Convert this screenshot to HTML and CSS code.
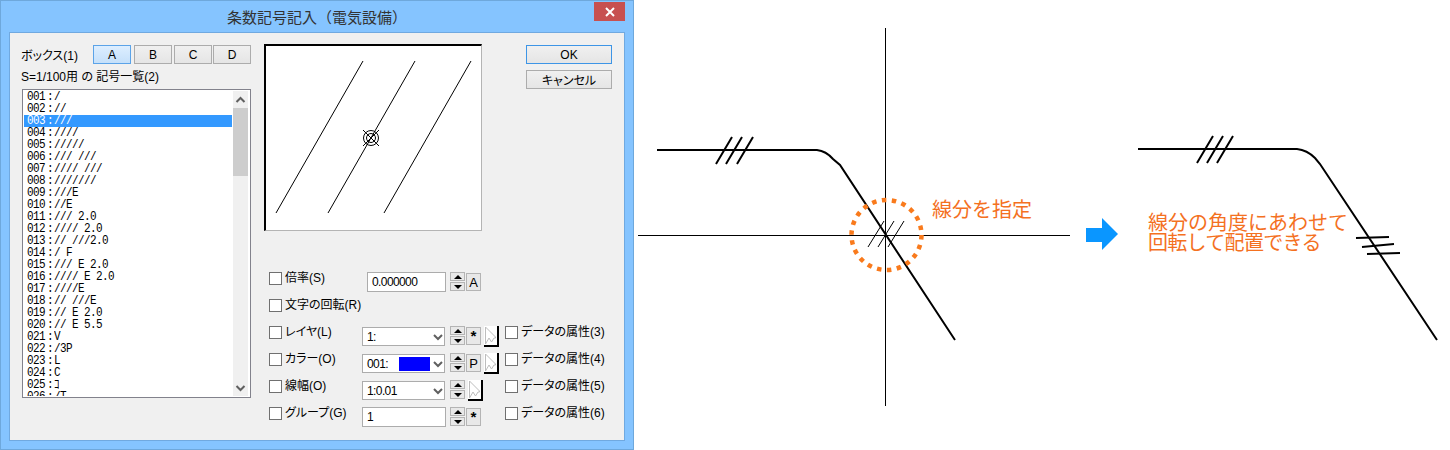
FILE: index.html
```html
<!DOCTYPE html>
<html lang="ja">
<head>
    <meta charset="UTF-8">
    <title>条数記号記入</title>
    <link rel="stylesheet" href="styles.css">
</head>
<body>
<div class="page">
    <!-- Dialog -->
    <div class="dialog">
        <div class="titlebar">
            <span class="title">条数記号記入（電気設備）</span>
            <div class="close">
                <svg width="12" height="12" viewBox="0 0 12 12"><path d="M2 2 L10 10 M10 2 L2 10" stroke="#fff" stroke-width="2"/></svg>
            </div>
        </div>
        <div class="client">
            <div class="left-col">
                <div class="box-row">
                    <span class="box-label">ボックス(1)</span>
                    <div class="btn tab active">A</div>
                    <div class="btn tab tab-b">B</div>
                    <div class="btn tab tab-c">C</div>
                    <div class="btn tab tab-d">D</div>
                </div>
                <div class="list-label">S=1/100用 の 記号一覧(2)</div>
                <div class="list">
                    <ul class="rows">
                        <li><span class="no">001 :</span><span>/</span></li>
                        <li><span class="no">002 :</span><span>//</span></li>
                        <li class="selected"><span class="no">003 :</span><span>///</span></li>
                        <li><span class="no">004 :</span><span>////</span></li>
                        <li><span class="no">005 :</span><span>/////</span></li>
                        <li><span class="no">006 :</span><span>/// ///</span></li>
                        <li><span class="no">007 :</span><span>//// ///</span></li>
                        <li><span class="no">008 :</span><span>///////</span></li>
                        <li><span class="no">009 :</span><span>///E</span></li>
                        <li><span class="no">010 :</span><span>//E</span></li>
                        <li><span class="no">011 :</span><span>/// 2.0</span></li>
                        <li><span class="no">012 :</span><span>//// 2.0</span></li>
                        <li><span class="no">013 :</span><span>// ///2.0</span></li>
                        <li><span class="no">014 :</span><span>/ F</span></li>
                        <li><span class="no">015 :</span><span>/// E 2.0</span></li>
                        <li><span class="no">016 :</span><span>//// E 2.0</span></li>
                        <li><span class="no">017 :</span><span>////E</span></li>
                        <li><span class="no">018 :</span><span>// ///E</span></li>
                        <li><span class="no">019 :</span><span>// E 2.0</span></li>
                        <li><span class="no">020 :</span><span>// E 5.5</span></li>
                        <li><span class="no">021 :</span><span>V</span></li>
                        <li><span class="no">022 :</span><span>/3P</span></li>
                        <li><span class="no">023 :</span><span>L</span></li>
                        <li><span class="no">024 :</span><span>C</span></li>
                        <li><span class="no">025 :</span><span>ｺ</span></li>
                        <li><span class="no">026 :</span><span>/T</span></li>
                    </ul>
                    <div class="scrollbar">
                        <svg class="arrow" width="15" height="16" viewBox="0 0 15 16"><path d="M3.500 11 L7.500 7 L11.500 11" fill="none" stroke="#606060" stroke-width="2"/></svg>
                        <div class="thumb"></div>
                        <svg class="arrow arrow-down" width="15" height="16" viewBox="0 0 15 16"><path d="M3.500 6 L7.500 10 L11.500 6" fill="none" stroke="#606060" stroke-width="2"/></svg>
                    </div>
                </div>
            </div>

            <div class="right-col">
                <div class="top-row">
                    <div class="preview">
                        <svg width="214" height="183" viewBox="266 46 214 183">
                            <path d="M276 213 L363 61 M328 213 L415 61 M384 213 L471 61" stroke="#000" fill="none"/>
                            <circle cx="371" cy="138" r="7.500" stroke="#000" fill="none"/>
                            <circle cx="371" cy="138" r="4.500" stroke="#000" fill="none"/>
                            <path d="M363 130 L379 146 M379 130 L363 146" stroke="#000" fill="none"/>
                        </svg>
                    </div>
                    <div class="actions">
                        <div class="btn action default">OK</div>
                        <div class="btn action">キャンセル</div>
                    </div>
                </div>

                <!-- Options -->
                <div class="options">
                    <label class="check"><i class="box"></i>倍率(S)</label>
                    <div class="controls indent">
                        <div class="field field-short">0.000000</div>
                        <div class="spin"><b class="up"></b><b class="down"></b></div>
                        <div class="btn mini">A</div>
                    </div>
                    <div></div>

                    <label class="check wide"><i class="box"></i>文字の回転(R)</label>

                    <label class="check"><i class="box"></i>レイヤ(L)</label>
                    <div class="controls">
                        <div class="combo"><span>1:</span><svg class="chev" width="10" height="8" viewBox="0 0 10 8"><path d="M1 2 L5 6 L9 2" fill="none" stroke="#606060" stroke-width="2"/></svg></div>
                        <div class="spin"><b class="up"></b><b class="down"></b></div>
                        <div class="btn mini star">*</div>
                        <div class="pick"><svg width="13" height="19" viewBox="0 0 13 19"><path d="M1.500 18 V1 L11.500 11 V12 H10 L7.500 16 L5 12 L1.500 18" fill="none" stroke="#bdbdbd"/></svg></div>
                    </div>
                    <label class="check"><i class="box"></i>データの属性(3)</label>

                    <label class="check"><i class="box"></i>カラー(O)</label>
                    <div class="controls">
                        <div class="combo"><span>001:</span><i class="swatch"></i><svg class="chev" width="10" height="8" viewBox="0 0 10 8"><path d="M1 2 L5 6 L9 2" fill="none" stroke="#606060" stroke-width="2"/></svg></div>
                        <div class="spin"><b class="up"></b><b class="down"></b></div>
                        <div class="btn mini">P</div>
                        <div class="pick"><svg width="13" height="19" viewBox="0 0 13 19"><path d="M1.500 18 V1 L11.500 11 V12 H10 L7.500 16 L5 12 L1.500 18" fill="none" stroke="#bdbdbd"/></svg></div>
                    </div>
                    <label class="check"><i class="box"></i>データの属性(4)</label>

                    <label class="check"><i class="box"></i>線幅(O)</label>
                    <div class="controls">
                        <div class="combo"><span>1:0.01</span><svg class="chev" width="10" height="8" viewBox="0 0 10 8"><path d="M1 2 L5 6 L9 2" fill="none" stroke="#606060" stroke-width="2"/></svg></div>
                        <div class="spin"><b class="up"></b><b class="down"></b></div>
                        <div class="pick pick-tight"><svg width="13" height="19" viewBox="0 0 13 19"><path d="M1.500 18 V1 L11.500 11 V12 H10 L7.500 16 L5 12 L1.500 18" fill="none" stroke="#bdbdbd"/></svg></div>
                    </div>
                    <label class="check"><i class="box"></i>データの属性(5)</label>

                    <label class="check"><i class="box"></i>グループ(G)</label>
                    <div class="controls">
                        <div class="field field-long">1</div>
                        <div class="spin"><b class="up"></b><b class="down"></b></div>
                        <div class="btn mini star">*</div>
                    </div>
                    <label class="check"><i class="box"></i>データの属性(6)</label>
                </div>
            </div>
        </div>
    </div>

    <!-- Drawing -->
    <svg class="drawing" width="816" height="450" viewBox="634 0 816 450">
        <path d="M885 28 V406 M638 235 H1070" stroke="#000" fill="none" shape-rendering="crispEdges"/>
        <path d="M657 150 H817 Q826 151 833 159 L840 165 L955 340" stroke="#000" stroke-width="2" fill="none"/>
        <path d="M716 164 L732 137 M726 164 L742 137 M737 164 L753 137" stroke="#000" stroke-width="2" fill="none"/>
        <path d="M868 247 L884 221 M878 247 L894 221 M888 247 L904 221" stroke="#000" fill="none"/>
        <circle cx="886.500" cy="235" r="35" stroke="#f97a1c" stroke-width="4.500" fill="none" stroke-dasharray="4.500 5.500"/>
        <text class="note" x="932" y="217">線分を指定</text>

        <path d="M1086 228 H1102 V218 L1118 234 L1102 250 V242 H1086 Z" fill="#0a96ff"/>
        <text class="note">
            <tspan x="1148" y="230">線分の角度にあわせて</tspan>
            <tspan class="note-tight" x="1148" y="250">回転して配置できる</tspan>
        </text>

        <path d="M1138 149 H1297 Q1307 150 1315 158 L1320 164 L1437 340" stroke="#000" stroke-width="2" fill="none"/>
        <path d="M1197 163 L1213 136 M1207 163 L1223 136 M1217 163 L1233 136" stroke="#000" stroke-width="2" fill="none"/>
        <path d="M1356 238 L1389 237 M1362 247 L1394 244 M1367 254 L1400 253" stroke="#000" stroke-width="2" fill="none"/>
    </svg>
</div>
</body>
</html>
```
FILE: styles.css
```css
* {
    box-sizing: border-box;
}

body {
    margin: 0;
    background-color: #fff;
    font-family: "Liberation Sans", "Noto Sans CJK JP", sans-serif;
    font-size: 12px;
    font-feature-settings: "palt";
    color: #000;
}

.page {
    display: flex;
    width: 1450px;
    height: 450px;
    overflow: hidden;
}

.drawing {
    display: block;
    flex: none;
}

.note {
    font-family: "Noto Sans CJK JP", sans-serif;
    font-size: 20px;
    font-feature-settings: normal;
    fill: #f4711f;
}

.note-tight {
    letter-spacing: -0.700px;
}

/* Window */
.dialog {
    flex: none;
    display: flex;
    flex-direction: column;
    width: 634px;
    height: 450px;
    background-color: #85c4ff;
    border: 1px solid #6ea8dc;
}

.titlebar {
    position: relative;
    flex: none;
    height: 31px;
    display: flex;
    justify-content: center;
    align-items: center;
    padding-bottom: 1px;
}

.title {
    font-family: "Noto Sans CJK JP", sans-serif;
    font-size: 15px;
    font-feature-settings: normal;
    color: #333;
}

.close {
    position: absolute;
    top: 1px;
    right: 8px;
    width: 31px;
    height: 19px;
    background-color: #c75050;
    display: flex;
    justify-content: center;
    align-items: center;
}

.client {
    flex: none;
    display: flex;
    height: 409px;
    margin: 0 8px 0 8px;
    padding: 12px 0 0 11px;
    background-color: #f0f0f0;
    border: 1px solid #70a9e0;
}

/* Left column */
.left-col {
    flex: none;
    width: 230px;
}

.box-row {
    display: flex;
    align-items: center;
    height: 19px;
}

.box-label {
    flex: none;
    width: 72px;
}

.list-label {
    margin-top: 6px;
    height: 19px;
    line-height: 14px;
}

.btn {
    display: flex;
    flex: none;
    justify-content: center;
    align-items: center;
    background: linear-gradient(#f0f0f0, #e5e5e5);
    border: 1px solid #acacac;
}

.tab {
    width: 38px;
    height: 19px;
    margin-right: 2px;
}

.tab.active {
    background: linear-gradient(#ddeeff, #c5e0fa);
    border-color: #5ba3e8;
}

.tab-b {
    margin-left: 1px;
}

.tab-d {
    margin-left: -1px;
}

.list {
    display: flex;
    margin-left: 1px;
    width: 229px;
    height: 309px;
    background-color: #fff;
    border: 1px solid #82828c;
    padding: 1px 2px 1px 1px;
}

.rows {
    flex: 1;
    list-style: none;
    margin: 0;
    padding: 0;
    overflow: hidden;
    font-family: "Liberation Mono", "Noto Sans CJK JP", monospace;
    font-size: 11px;
    font-feature-settings: normal;
    letter-spacing: -0.600px;
}

.rows li {
    display: flex;
    height: 12px;
    line-height: 12px;
    padding-left: 3px;
    white-space: pre;
}

/* the list font is tall and narrow */
.rows span {
    transform: scaleY(1.15);
}

.rows .selected {
    background-color: #3399ff;
    color: #fff;
}

.no {
    width: 27px;
    word-spacing: -4px;
}

.scrollbar {
    flex: none;
    width: 15px;
    margin-left: 1px;
    background-color: #f0f0f0;
    display: flex;
    flex-direction: column;
}

.arrow {
    display: block;
    flex: none;
}

.arrow-down {
    margin-top: auto;
}

.thumb {
    height: 68px;
    margin-top: 1px;
    background-color: #cdcdcd;
}

/* Right column */
.right-col {
    flex: none;
    margin-left: 13px;
    margin-top: -1px;
}

.top-row {
    display: flex;
}

.preview {
    width: 218px;
    height: 187px;
    background-color: #fff;
    border: 2px solid #000;
    border-right: 1px solid #b4b4b4;
    border-bottom: 1px solid #b4b4b4;
}

.preview svg {
    display: block;
}

.actions {
    margin-left: 44px;
    margin-top: 1px;
    display: flex;
    flex-direction: column;
    gap: 6px;
}

.action {
    width: 86px;
    height: 19px;
}

.action.default {
    border-color: #3d95e6;
}

.options {
    display: grid;
    grid-template-columns: 93px 143px auto;
    grid-auto-rows: 27px;
    margin: 41px 0 0 5px;
}

.check {
    display: flex;
    gap: 3px;
    height: 13px;
    line-height: 13px;
    white-space: nowrap;
}

.wide {
    grid-column: 1 / -1;
}

.box {
    flex: none;
    width: 13px;
    height: 13px;
    background-color: #fff;
    border: 1px solid #707070;
}

.controls {
    display: flex;
    align-items: flex-start;
    gap: 1px;
}

.controls.indent {
    padding-left: 5px;
}

.field {
    height: 20px;
    line-height: 19px;
    padding-left: 4px;
    background-color: #fff;
    border: 1px solid #acacac;
    letter-spacing: -0.600px;
}

.field-short {
    width: 79px;
    margin-right: 3px;
}

.field-long {
    width: 84px;
    margin-right: 3px;
}

.combo {
    display: flex;
    align-items: center;
    width: 83px;
    height: 19px;
    margin-top: 1px;
    margin-right: 4px;
    padding-left: 4px;
    background-color: #fff;
    border: 1px solid #acacac;
    letter-spacing: -0.600px;
}

.swatch {
    width: 31px;
    height: 14px;
    margin-left: 11px;
    background-color: #00f;
}

.chev {
    margin-left: auto;
    margin-right: 1px;
}

.spin {
    display: flex;
    flex-direction: column;
    gap: 1px;
    width: 15px;
    height: 19px;
}

.spin b {
    flex: 1;
    display: flex;
    justify-content: center;
    align-items: center;
    background-color: #e8e8e8;
    border: 1px solid #b4b4b4;
}

.spin .up::before {
    content: "";
    border-left: 4px solid transparent;
    border-right: 4px solid transparent;
    border-bottom: 4px solid #000;
}

.spin .down::before {
    content: "";
    border-left: 4px solid transparent;
    border-right: 4px solid transparent;
    border-top: 4px solid #000;
}

.mini {
    width: 15px;
    height: 18px;
    margin-top: 1px;
    background: #e8e8e8;
    border-color: #b4b4b4;
    font-size: 13px;
}

.mini.star {
    font-family: "Liberation Mono", monospace;
    font-size: 15px;
    font-weight: bold;
    padding-top: 4px;
}

.pick {
    width: 15px;
    height: 21px;
    margin-left: 2px;
    background-color: #fff;
    border-right: 2px solid #000;
    border-bottom: 2px solid #000;
}

.pick svg {
    display: block;
}

.pick-tight {
    margin-left: 2px;
}
```
